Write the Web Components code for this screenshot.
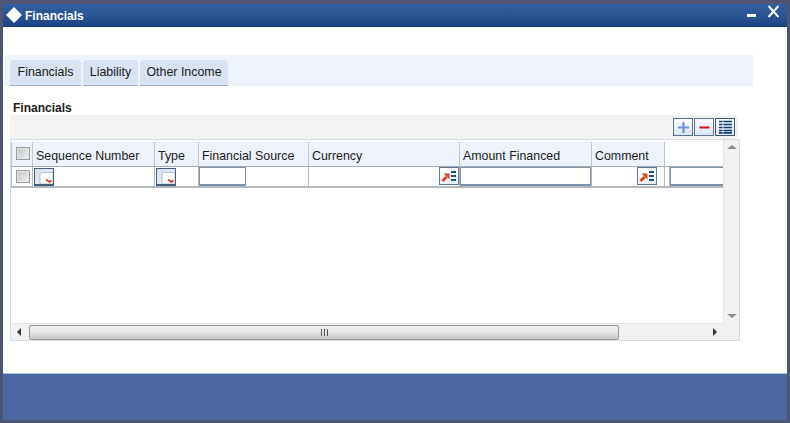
<!DOCTYPE html>
<html>
<head>
<meta charset="utf-8">
<title>Financials</title>
<style>
  html, body { margin: 0; height: 100%; overflow: hidden; background: #4d5573; }
  body { font: 12px "Liberation Sans", Arial, sans-serif; color: #1c1c1c; }
</style>
</head>
<body>
<app-window heading="Financials">
  <tab-bar></tab-bar>
  <section-title>Financials</section-title>
  <row-toolbar></row-toolbar>
  <data-grid></data-grid>
</app-window>

<script>
class AppWindow extends HTMLElement {
  connectedCallback() {
    this.attachShadow({ mode: 'open' });
    this.shadowRoot.innerHTML = `
      <style>
        :host { display: flex; flex-direction: column; box-sizing: border-box; width: 790px; height: 423px; padding: 4px 3px 3px 3px; background: #4d5573; }
        .title { height: 23px; flex: none; display: flex; align-items: center; padding: 0 8px 0 3px; color: #fff; font-weight: bold; font-size: 12px;
          background: linear-gradient(#33609f, #2a5393 55%, #1c4484); border-bottom: 1px solid #16366c; box-sizing: border-box; }
        .diamond { width: 16px; height: 16px; margin-right: 3px; flex: none; }
        .name { flex: 1; margin-top: 1px; }
        .btns { display: flex; align-items: flex-start; gap: 12px; height: 100%; }
        .btns svg { display: block; }
        .body { flex: 1; background: #fff; display: flex; flex-direction: column; padding: 28px 0 0 2px; min-height: 0; }
        .foot { height: 47px; flex: none; background: #4a689f; border-top: 1px solid #a9c3dc; box-sizing: border-box; }
      </style>
      <div class="title">
        <svg class="diamond" viewBox="0 0 16 16"><path d="M8 0 L16 8 L8 16 L0 8 Z" fill="#fff"/></svg>
        <span class="name"></span>
        <div class="btns">
          <svg width="9" height="20" viewBox="0 0 9 20"><rect x="0" y="10" width="9" height="3" fill="#fff"/></svg>
          <svg width="11" height="20" viewBox="0 0 11 20"><path d="M0.5 2 L10.5 13 M10.5 2 L0.5 13" stroke="#fff" stroke-width="2" fill="none"/></svg>
        </div>
      </div>
      <div class="body"><slot></slot></div>
      <div class="foot"></div>
    `;
    this.shadowRoot.querySelector('.name').textContent = this.getAttribute('heading');
  }
}
customElements.define('app-window', AppWindow);

class TabBar extends HTMLElement {
  connectedCallback() {
    this.attachShadow({ mode: 'open' });
    this.shadowRoot.innerHTML = `
      <style>
        :host { display: flex; align-items: flex-end; gap: 2px; height: 31px; width: 748px; box-sizing: border-box; padding-left: 5px; background: #eef2fa; }
        .tab { height: 26px; box-sizing: border-box; padding-top: 5px; text-align: center; background: #d9e2f1; border-bottom: 1px solid #9db0ca; border-radius: 4px 4px 0 0; color: #1c1c1c; font-size: 12.4px; }
      </style>
      <div class="tab" style="width:71px">Financials</div>
      <div class="tab" style="width:55px">Liability</div>
      <div class="tab" style="width:88px">Other Income</div>
    `;
  }
}
customElements.define('tab-bar', TabBar);

class SectionTitle extends HTMLElement {
  connectedCallback() {
    this.attachShadow({ mode: 'open' });
    this.shadowRoot.innerHTML = `
      <style>
        :host { display: block; height: 29px; box-sizing: border-box; padding: 15px 0 0 8px; font-weight: bold; font-size: 12px; line-height: 14px; color: #1c1c1c; }
      </style>
      <slot></slot>
    `;
  }
}
customElements.define('section-title', SectionTitle);

class RowToolbar extends HTMLElement {
  connectedCallback() {
    this.attachShadow({ mode: 'open' });
    this.shadowRoot.innerHTML = `
      <style>
        :host { display: flex; justify-content: flex-end; align-items: center; gap: 1px; box-sizing: border-box; height: 24px; width: 728px; margin-left: 5px; padding: 0 3px 0 0; background: #f3f3f3; }
        .b { width: 20px; height: 18px; box-sizing: border-box; border: 1px solid #5d7590; background: linear-gradient(#fbfcfe, #dbe5f2); display: flex; align-items: center; justify-content: center; }
      </style>
      <div class="b"><svg width="13" height="13" viewBox="0 0 13 13"><path d="M6.5 1 V12 M1 6.5 H12" stroke="#6f94d6" stroke-width="2.2"/></svg></div>
      <div class="b"><svg width="13" height="13" viewBox="0 0 13 13"><path d="M1.5 6.5 H11.5" stroke="#d2121a" stroke-width="2"/></svg></div>
      <div class="b" style="border-color:#3d556f"><svg width="15" height="14" viewBox="0 0 15 14"><path d="M1 1.5 H14 M1 4.5 H14 M1 7.5 H14 M1 10.5 H14 M1 12.8 H14" stroke="#123c70" stroke-width="1.7" fill="none"/><path d="M5 0.5 V13.5" stroke="#dfe8f3" stroke-width="1"/></svg></div>
    `;
  }
}
customElements.define('row-toolbar', RowToolbar);

const PICK_ICON = `<svg width="16" height="14" viewBox="0 0 16 14"><path d="M1.5 12 L5.5 8" stroke="#d8481f" stroke-width="3"/><path d="M2.5 4.5 H8.5 V10.5 Z" fill="#d8481f"/><path d="M10 3 H15 M10 7 H15 M10 11 H15" stroke="#1f4f80" stroke-width="2"/></svg>`;

const SELECT_ICON = `<svg width="18" height="15" viewBox="0 0 18 15" style="display:block"><path d="M5 15 V5.5 Q5 3.5 7 3.5 H18 V15 Z" fill="#fff" stroke="#b9bec5"/><path d="M11 10.5 L14.5 13 L16.5 11.5" stroke="#c23a2a" stroke-width="1.6" fill="none"/></svg>`;

class DataGrid extends HTMLElement {
  connectedCallback() {
    this.attachShadow({ mode: 'open' });
    const cols = [
      ['Sequence Number', 122], ['Type', 44], ['Financial Source', 110],
      ['Currency', 151], ['Amount Financed', 132], ['Comment', 73]
    ];
    this.shadowRoot.innerHTML = `
      <style>
        :host { display: grid; grid-template-columns: 1fr 16px; grid-template-rows: 1fr 17px; box-sizing: border-box; width: 730px; height: 202px; margin-left: 5px; border: 1px solid #d3dbe8; background: #fff; }
        .view { overflow: hidden; min-width: 0; padding-top: 2px; }
        .rows { width: 712px; }
        .row { display: flex; box-sizing: border-box; }
        .head { height: 24px; }
        .body { height: 22px; border-top: 1px solid #a9adb3; border-bottom: 2px solid #b4b7bb; }
        .c { flex: none; box-sizing: border-box; border-right: 1px solid #bcc7d6; position: relative; display: flex; align-items: center; }
        .head .c { background: #eef2fb; padding: 3px 0 0 3px; font-size: 12.4px; color: #1c1c1c; white-space: nowrap; }
        .head .c.sel, .body .c.sel { padding: 0 0 0 4px; justify-content: flex-start; }
        .head .c:first-child { border-left: 1px solid #bcc7d6; }
        .body .c { border-color: #b4b7bb; height: 100%; }
        .body .c:first-child { border-left: 1px solid #bcc7d6; }
        .cb { box-sizing: border-box; width: 14px; height: 13px; border: 1px solid #9a9d9f; background: linear-gradient(135deg, #bdbfc2, #f4f4f4); box-shadow: inset 0 0 0 1px #e6e6e6; }
        .head .cb { margin-top: -1px; }
        .sel-box { margin: 1px 0 0 1px; width: 20px; height: 18px; box-sizing: border-box; border: 1px solid #47607a; border-bottom-width: 2px; background: linear-gradient(135deg, #d3deee, #f2f5fa); overflow: hidden; }
        .txt { box-sizing: border-box; height: 19px; background: #fff; border: 1px solid #7f94a8; border-bottom-width: 2px; }
        .pick { position: absolute; right: 0; top: 0; width: 20px; height: 18px; box-sizing: border-box; border: 1px solid #5d7590; background: linear-gradient(#fff, #e9eef6); display: flex; align-items: center; justify-content: center; }
        .vbar { background: #f1f1f1; display: flex; flex-direction: column; justify-content: space-between; align-items: center; padding: 5px 0 5px; border-left: 1px solid #e4e4e4; }
        .hbar { background: #f1f1f1; display: flex; align-items: center; position: relative; padding: 0; border-top: 1px solid #e6e6e6; }
        .corner { background: #f1f1f1; }
        .arrow { width: 0; height: 0; border: 4px solid transparent; }
        .up { border-bottom-color: #8c8c8c; border-top-width: 0; border-left-width: 5px; border-right-width: 5px; }
        .down { border-top-color: #8c8c8c; border-bottom-width: 0; border-left-width: 5px; border-right-width: 5px; }
        .left { border-right-color: #333; border-left-width: 0; margin-left: 6px; }
        .right { border-left-color: #333; border-right-width: 0; margin-left: 94px; }
        .thumb { margin-left: 8px; width: 590px; height: 15px; box-sizing: border-box; border: 1px solid #999; border-radius: 2px; background: linear-gradient(#f0f0f0, #e6e6e6 45%, #c6c6c6); display: flex; align-items: center; justify-content: center; }
        .grip { width: 7px; height: 7px; background: repeating-linear-gradient(90deg, #555 0 1px, transparent 1px 3px); }
      </style>
      <div class="view">
        <div class="rows">
          <div class="row head">
            <div class="c sel" style="width:22px"><div class="cb"></div></div>
            ${cols.map(([t, w]) => `<div class="c" style="width:${w}px">${t}</div>`).join('')}
          </div>
          <div class="row body">
            <div class="c sel" style="width:22px"><div class="cb"></div></div>
            <div class="c" style="width:122px"><div class="sel-box">${SELECT_ICON}</div></div>
            <div class="c" style="width:44px"><div class="sel-box">${SELECT_ICON}</div></div>
            <div class="c" style="width:110px"><div class="txt" style="width:47px"></div></div>
            <div class="c" style="width:151px"><div class="pick">${PICK_ICON}</div></div>
            <div class="c" style="width:132px"><div class="txt" style="width:131px"></div></div>
            <div class="c" style="width:73px"><div class="pick" style="right:7px">${PICK_ICON}</div></div>
            <div class="c" style="width:58px;border-right:0;padding-left:5px"><div class="txt" style="width:53px;border-right:0;box-shadow:-1px 0 #b4b7bb"></div></div>
          </div>
        </div>
      </div>
      <div class="vbar"><span class="arrow up"></span><span class="arrow down"></span></div>
      <div class="hbar">
        <span class="arrow left"></span>
        <div class="thumb"><span class="grip"></span></div>
        <span class="arrow right"></span>
      </div>
      <div class="corner"></div>
    `;
  }
}
customElements.define('data-grid', DataGrid);
</script>
</body>
</html>
